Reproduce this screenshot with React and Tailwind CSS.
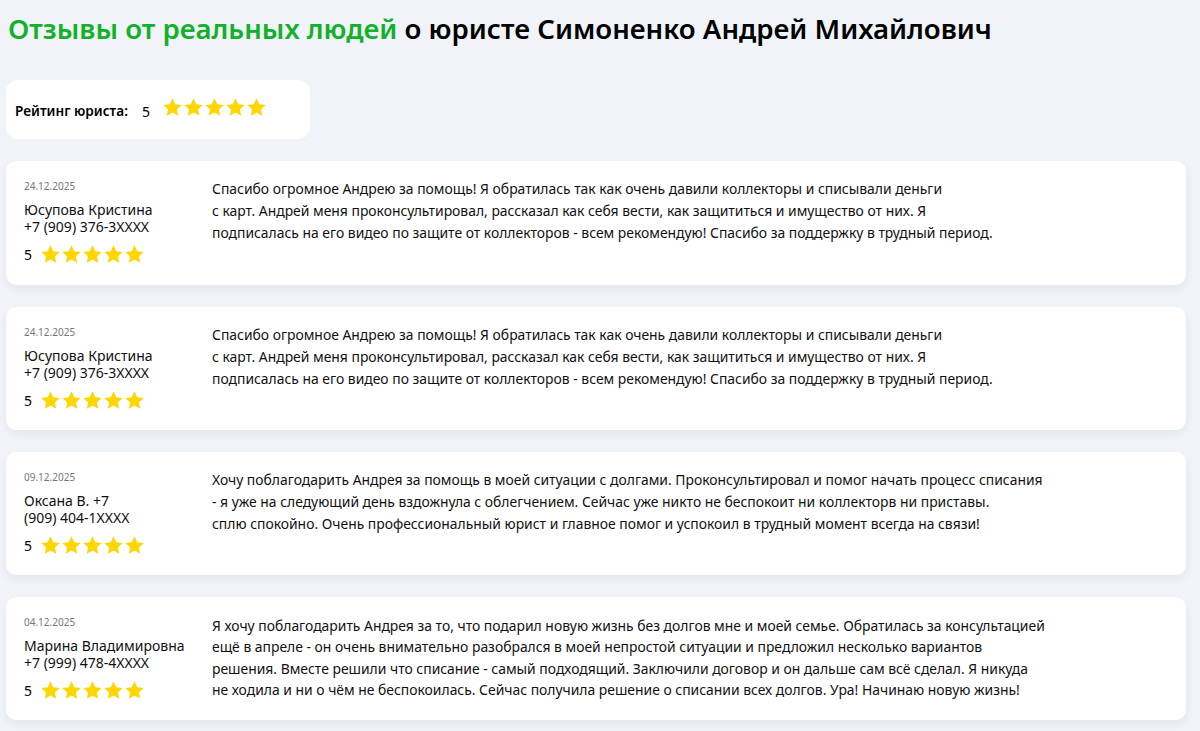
import React from "react";

const Star = ({ size = 19 }) => (
  <svg width={size} height={size} viewBox="0 0 24 24" className="shrink-0">
    <path
      d="M12 1.5l3.15 6.7 7.3.9-5.4 5.05 1.45 7.25L12 17.85 5.5 21.4l1.45-7.25-5.4-5.05 7.3-.9z"
      fill="#ffd600"
    />
  </svg>
);

const Stars = ({ size = 19, gap = "gap-[2px]" }) => (
  <div className={`flex items-center ${gap}`}>
    {[0, 1, 2, 3, 4].map((i) => (
      <Star key={i} size={size} />
    ))}
  </div>
);

const reviews = [
  {
    date: "24.12.2025",
    name: ["Юсупова Кристина", "+7 (909) 376-3XXXX"],
    lines: [
      "Спасибо огромное Андрею за помощь! Я обратилась так как очень давили коллекторы и списывали деньги",
      "с карт. Андрей меня проконсультировал, рассказал как себя вести, как защититься и имущество от них. Я",
      "подписалась на его видео по защите от коллекторов - всем рекомендую! Спасибо за поддержку в трудный период.",
    ],
  },
  {
    date: "24.12.2025",
    name: ["Юсупова Кристина", "+7 (909) 376-3XXXX"],
    lines: [
      "Спасибо огромное Андрею за помощь! Я обратилась так как очень давили коллекторы и списывали деньги",
      "с карт. Андрей меня проконсультировал, рассказал как себя вести, как защититься и имущество от них. Я",
      "подписалась на его видео по защите от коллекторов - всем рекомендую! Спасибо за поддержку в трудный период.",
    ],
  },
  {
    date: "09.12.2025",
    name: ["Оксана В. +7", "(909) 404-1XXXX"],
    lines: [
      "Хочу поблагодарить Андрея за помощь в моей ситуации с долгами. Проконсультировал и помог начать процесс списания",
      "- я уже на следующий день вздожнула с облегчением. Сейчас уже никто не беспокоит ни коллекторв ни приставы.",
      "сплю спокойно. Очень профессиональный юрист и главное помог и успокоил в трудный момент всегда на связи!",
    ],
  },
  {
    date: "04.12.2025",
    name: ["Марина Владимировна", "+7 (999) 478-4XXXX"],
    lines: [
      "Я хочу поблагодарить Андрея за то, что подарил новую жизнь без долгов мне и моей семье. Обратилась за консультацией",
      "ещё в апреле - он очень внимательно разобрался в моей непростой ситуации и предложил несколько вариантов",
      "решения. Вместе решили что списание - самый подходящий. Заключили договор и он дальше сам всё сделал. Я никуда",
      "не ходила и ни о чём не беспокоилась. Сейчас получила решение о списании всех долгов. Ура! Начинаю новую жизнь!",
    ],
    tight: true,
  },
];

export default function App() {
  return (
    <div
      className="min-h-[731px] bg-[#f0f3f8] pl-[6px] pr-[14px] text-black"
      style={{ fontFamily: '"Noto Sans", "Open Sans", sans-serif' }}
    >
      <h1 className="pl-[2px] pt-[10px] text-[27.6px] leading-[36px] font-semibold">
        <span className="text-[#13b02a]">Отзывы от реальных людей</span>{" "}
        <span>о юристе Симоненко Андрей Михайлович</span>
      </h1>

      <div className="mt-[34px] flex h-[59px] w-[304px] items-center rounded-[12px] bg-white pl-[9px]">
        <span className="mt-[3px] text-[13.6px] font-semibold">Рейтинг юриста:</span>
        <span className="ml-[14px] mt-[3px] text-[14px]">5</span>
        <div className="ml-[12px] -mt-[4px]">
          <Stars size={21} gap="gap-[0px]" />
        </div>
      </div>

      <div className="mt-[22px] flex flex-col gap-[22px]">
        {reviews.map((r, i) => (
          <div
            key={i}
            className={`flex ${i === 0 ? "min-h-[124px]" : "min-h-[123px]"} rounded-[10px] bg-white pl-[18px] pt-[17px] pb-[17px] shadow-[0_4px_8px_rgba(30,40,70,0.06)]`}
          >
            <div className="w-[188px] shrink-0">
              <div className="text-[10px] leading-[16px] text-[#777]">{r.date}</div>
              <div className="mt-[7px] text-[14px] leading-[17px] text-[#111]">
                {r.name[0]}
                <br />
                {r.name[1]}
              </div>
              <div className="mt-[9px] flex items-center">
                <span className="text-[14px] leading-[20px]">5</span>
                <div className="ml-[8px]">
                  <Stars size={21} gap="gap-[0px]" />
                </div>
              </div>
            </div>
            <div
              className={`text-[13.9px] text-[#111] ${r.tight ? "leading-[21.4px] pt-[1px]" : "leading-[22px]"}`}
            >
              {r.lines.map((l, j) => (
                <div key={j} className="whitespace-nowrap">
                  {l}
                </div>
              ))}
            </div>
          </div>
        ))}
      </div>
    </div>
  );
}
